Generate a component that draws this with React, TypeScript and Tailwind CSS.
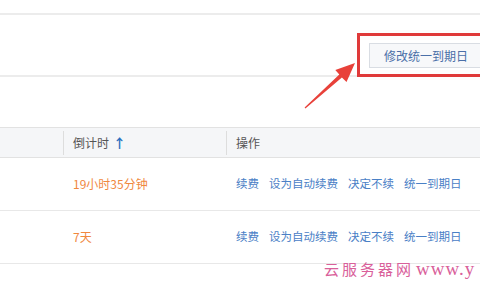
import React from "react";

const font = { fontFamily: '"Noto Sans CJK SC", "Noto Sans", sans-serif' };

function Row({ time }: { time: string }) {
  return (
    <div className="flex h-[53px] items-center border-b border-[#e8e8e8] text-[12px]">
      <div className="w-[63px]" />
      <div className="w-[163px] pl-[10px] text-[#f0883e]">{time}</div>
      <div className="flex gap-[10px] pl-[10px] text-[11.5px] text-[#4a80c6]">
        <span>续费</span>
        <span>设为自动续费</span>
        <span>决定不续</span>
        <span>统一到期日</span>
      </div>
    </div>
  );
}

export default function App() {
  return (
    <div className="relative h-[300px] w-[480px] overflow-hidden bg-white" style={font}>
      <div className="h-[13px]" />
      <div className="h-[2px] bg-[#ececec]" />
      <div className="h-[60px] pl-[369px] pt-[28px]">
        <div className="flex h-[25px] w-[130px] items-center border border-[#d9dde3] bg-[#f7f8fa] pl-[14px] text-[12px] text-[#4a6fa8]">
          修改统一到期日
        </div>
      </div>
      <div className="h-[2px] bg-[#ececec]" />
      <div className="h-[50px]" />
      <div className="flex h-[31px] items-center border-y border-[#e2e2e2] bg-[#f5f6f8] text-[12px] text-[#555]">
        <div className="h-full w-[63px]" />
        <div className="h-[24px] w-px bg-[#dddddd]" />
        <div className="flex w-[162px] items-center pl-[9px]">
          <span>倒计时</span>
          <span className="ml-[4px] text-[13px] font-bold text-[#2a6fbf]">↑</span>
        </div>
        <div className="h-[24px] w-px bg-[#dddddd]" />
        <div className="pl-[9px]">操作</div>
      </div>
      <Row time="19小时35分钟" />
      <Row time="7天" />

      <div className="pointer-events-none absolute left-[357px] top-[33px] h-[44px] w-[140px] border-[3px] border-[#e03a3a]" />
      <svg className="absolute left-0 top-0" width="480" height="300" viewBox="0 0 480 300">
        <polygon
          points="304.6,107.6 339.3,74.5 335.3,70 355,63 346.5,82 341.9,77.5 305.4,108.4"
          fill="#e8413a"
        />
      </svg>
      <div
        className="absolute left-[324px] top-[255px] flex items-baseline whitespace-nowrap text-[15px] tracking-[3px] text-[#d9609a]"
        style={{ fontFamily: '"Noto Sans CJK SC", serif' }}
      >
        <span>云服务器网</span>
        <span style={{ fontFamily: '"Liberation Serif", serif' }} className="ml-[2px] text-[19px] tracking-[1px]">www.y</span>
      </div>
    </div>
  );
}
